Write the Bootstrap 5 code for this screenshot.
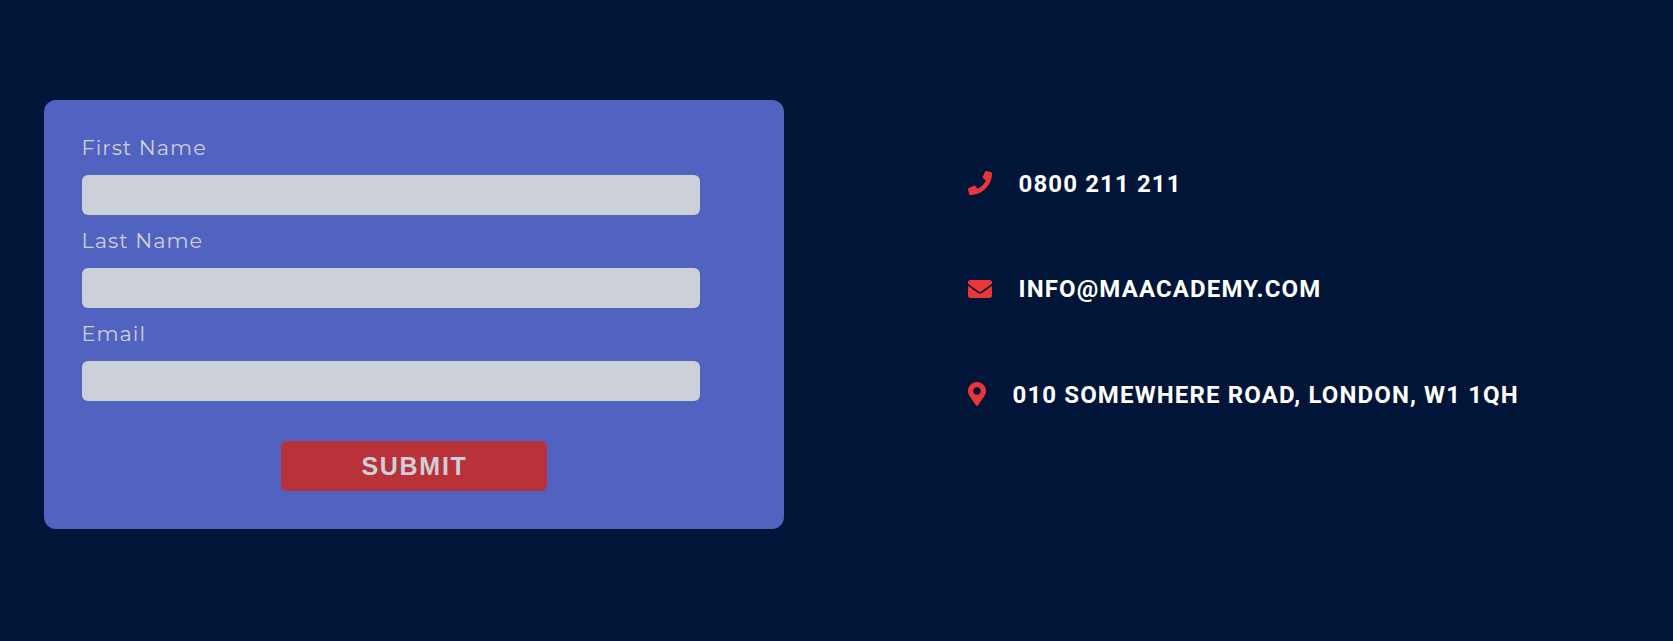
<!DOCTYPE html>
<html lang="en">
<head>
<meta charset="utf-8">
<meta name="viewport" content="width=device-width, initial-scale=1">
<title>Contact</title>
<link href="https://cdn.jsdelivr.net/npm/bootstrap@5.3.0/dist/css/bootstrap.min.css" rel="stylesheet">
<style>
body{background:#001537;min-height:641px}
.contact{padding:100px 0 0 44px}
.signup{width:740px;height:429px;background:#5162c1;border-radius:12px;padding:30px 38px 0}
.signup label{font:400 20.8px/35px "Montserrat","Inter","Open Sans",sans-serif;letter-spacing:1.04px;color:#ccd0d9;margin:0 0 10px -.5px}
.signup .form-control{width:618px;height:40px;background:#ccd0d9;border:0;border-radius:6px;margin-bottom:8px}
.signup .btn{width:266px;height:50px;margin-top:32px;background:#b93239;color:#ccd0d9;border:0;border-radius:6px;font:700 25px/51px "Liberation Sans",sans-serif;letter-spacing:1.7px;padding:0 0 0 1px}
.details{margin-left:184.3px;padding-top:69.5px;gap:77.5px;font:700 24px/28px "Roboto",sans-serif;letter-spacing:1.13px;color:#fff}
.details svg{height:24px;fill:#e93739;margin-right:26.2px;margin-top:-1px}
</style>
</head>
<body>
<main class="contact d-flex align-items-start">
<form class="signup d-flex flex-column">
<label for="first">First Name</label>
<input id="first" class="form-control" type="text">
<label for="last">Last Name</label>
<input id="last" class="form-control" type="text">
<label for="email">Email</label>
<input id="email" class="form-control" type="email">
<button class="btn align-self-center" type="button">SUBMIT</button>
</form>
<address class="details d-flex flex-column mb-0 text-nowrap">
<div class="d-flex align-items-center"><svg width="24" viewBox="0 0 512 512"><path d="M493.4 24.6l-104-24c-11.3-2.6-22.9 3.3-27.5 13.9l-48 112c-4.2 9.8-1.4 21.3 6.9 28l60.6 49.6c-36 76.7-98.9 140.5-177.2 177.2l-49.6-60.6c-6.8-8.3-18.2-11.1-28-6.9l-112 48C3.9 366.5-2 378.1.6 389.4l24 104C27.1 504.2 36.7 512 48 512c256.1 0 464-207.5 464-464 0-11.2-7.7-20.9-18.6-23.4z"/></svg><span>0800 211 211</span></div>
<div class="d-flex align-items-center"><svg width="24" viewBox="0 0 512 512"><path d="M502.3 190.8c3.9-3.1 9.7-.2 9.7 4.7V400c0 26.5-21.5 48-48 48H48c-26.5 0-48-21.5-48-48V195.6c0-5 5.7-7.8 9.7-4.7 22.4 17.4 52.1 39.5 154.1 113.6 21.1 15.4 56.7 47.8 92.2 47.6 35.7.3 72-32.8 92.3-47.6 102-74.1 131.6-96.3 154-113.7zM256 320c23.2.4 56.6-29.2 73.4-41.4 132.7-96.3 142.8-104.7 173.4-128.7 5.8-4.5 9.2-11.5 9.2-18.9v-19c0-26.5-21.5-48-48-48H48c-26.5 0-48 21.5-48 48v19c0 7.4 3.4 14.3 9.2 18.9 30.6 23.9 40.7 32.4 173.4 128.7 16.8 12.2 50.2 41.8 73.4 41.4z"/></svg><span>INFO@MAACADEMY.COM</span></div>
<div class="d-flex align-items-center"><svg width="18" viewBox="0 0 384 512"><path d="M172.268 501.67C26.97 291.031 0 269.413 0 192 0 85.961 85.961 0 192 0s192 85.961 192 192c0 77.413-26.97 99.031-172.268 309.67-9.535 13.774-29.93 13.773-39.464 0zM192 272c44.183 0 80-35.817 80-80s-35.817-80-80-80-80 35.817-80 80 35.817 80 80 80z"/></svg><span>010 SOMEWHERE ROAD, LONDON, W1 1QH</span></div>
</address>
</main>
<script src="https://cdn.jsdelivr.net/npm/bootstrap@5.3.0/dist/js/bootstrap.bundle.min.js"></script>
</body>
</html>
